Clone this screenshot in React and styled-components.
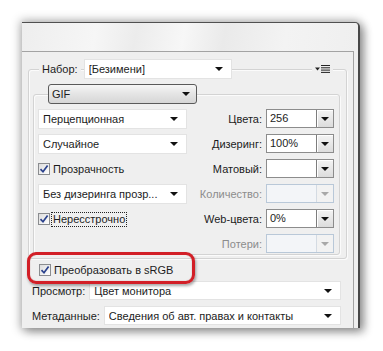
import React from "react";
import styled, { createGlobalStyle } from "styled-components";

const Global = createGlobalStyle`
  html, body { margin: 0; padding: 0; background: #ffffff; }
  body { font-family: "Liberation Sans", Arial, sans-serif; font-size: 11px; color: #1c1c1c; }
  * { box-sizing: border-box; }
`;

const Stage = styled.div`
  width: 383px;
  height: 351px;
  padding: 22px 23px 23px 22px;
  background: #ffffff;
`;

const Panel = styled.div`
  width: 338px;
  height: 306px;
  display: flex;
  flex-direction: column;
  background: #efefef;
  border-top: 1px solid #505050;
  border-right: 2px solid #484848;
  border-top-right-radius: 5px;
  box-shadow: 0 0 10px 2px rgba(0, 0, 0, 0.28), 4px 4px 10px rgba(0, 0, 0, 0.3);
`;

const Header = styled.div`
  height: 28px;
  flex: none;
  border-top-right-radius: 4px;
  background: linear-gradient(100deg, #eeeeee 0%, #f6f6f6 22%, #ececec 34%, #f7f7f7 48%, #eaeaea 60%, #f3f3f3 78%, #efefef 100%);
`;

const Content = styled.div`
  flex: 1;
  margin-right: 4px;
  border-top: 1px solid #a3a3a3;
  border-right: 1px solid #a3a3a3;
  padding: 17px 6px 0 6px;
  display: flex;
  flex-direction: column;
`;

const Group = styled.div`
  border: 1px solid #d3d3d3;
  border-radius: 3px;
  box-shadow: inset 1px 1px 0 #fbfbfb, 1px 1px 0 #fbfbfb;
  margin: ${(p) => p.$margin || "0"};
  display: flex;
  flex-direction: column;
`;

const Legend = styled.div`
  display: flex;
  align-items: center;
  height: 20px;
  margin-top: -11px;
  padding-left: ${(p) => p.$indent}px;
`;

const LegendLabel = styled.span`
  background: #efefef;
  padding: 0 3px;
  line-height: 20px;
`;

const Spacer = styled.div`
  flex: 1;
`;

const MenuButton = styled.span`
  background: #efefef;
  padding: 0 3px;
  margin-right: 13px;
  display: flex;
  align-items: center;
  height: 20px;
`;

const Select = styled.div`
  width: ${(p) => (p.$width ? `${p.$width}px` : "auto")};
  flex: ${(p) => (p.$grow ? 1 : "none")};
  height: ${(p) => p.$h || 20}px;
  margin-left: ${(p) => p.$ml || 0}px;
  background: #ffffff;
  border: 1px solid #e3e3e3;
  display: flex;
  align-items: center;
  padding: 0 8px 0 4px;
  white-space: nowrap;
`;

const SelectText = styled.span`
  flex: 1;
  overflow: hidden;
`;

const Arrow = styled.span`
  width: 0;
  height: 0;
  border-left: 4px solid transparent;
  border-right: 4px solid transparent;
  border-top: 4px solid ${(p) => (p.$disabled ? "#a8a8a8" : "#111")};
`;

const FormatSelect = styled.div`
  width: 149px;
  height: 20px;
  margin-left: 14px;
  border: 1px solid #5a5a5a;
  border-radius: 3px;
  background: linear-gradient(#f6f6f6, #e4e4e4 50%, #d6d6d6);
  display: flex;
  align-items: center;
  padding: 0 6px 0 3px;
`;

const Grid = styled.div`
  display: grid;
  grid-template-columns: 149px 1fr 68px;
  grid-auto-rows: 20px;
  column-gap: 4px;
  row-gap: 5px;
  margin-top: 5px;
  padding: 0 5px 0 4px;
`;

const Cell = styled.div`
  grid-column: ${(p) => p.$col};
  grid-row: ${(p) => p.$row};
  display: flex;
  align-items: center;
  justify-content: ${(p) => (p.$end ? "flex-end" : "flex-start")};
  color: ${(p) => (p.$disabled ? "#8c8c8c" : "inherit")};
  white-space: nowrap;
`;

const Combo = styled.div`
  width: 68px;
  height: 19px;
  display: flex;
  background: ${(p) => (p.$disabled ? "#f3f5f8" : "#ffffff")};
  border: 1px solid ${(p) => (p.$disabled ? "#b9c8d8" : "#8c8c8c")};
  align-self: flex-start;
`;

const ComboText = styled.span`
  flex: 1;
  padding-left: 3px;
  line-height: 17px;
`;

const ComboButton = styled.span`
  width: 17px;
  display: flex;
  align-items: center;
  justify-content: center;
  border-left: 1px solid ${(p) => (p.$disabled ? "#d4dbe3" : "#7d7d7d")};
  background: ${(p) => (p.$disabled ? "#f2f2f2" : "linear-gradient(#f4f4f4, #dcdcdc)")};
  box-shadow: ${(p) => (p.$disabled ? "none" : "inset 1px 1px 0 #ffffff")};
`;

const CheckRow = styled.label`
  display: flex;
  align-items: center;
  gap: 2px;
  position: relative;
  height: 14px;
`;

const Box = styled.span`
  width: 12px;
  height: 12px;
  border: 1px solid #8a8c8f;
  background: linear-gradient(135deg, #dcdcdc, #ffffff);
  display: flex;
  align-items: center;
  justify-content: center;
  flex: none;
`;

const CheckText = styled.span`
  padding: 0 1px;
  outline: ${(p) => (p.$focus ? "1px dotted #222" : "none")};
  line-height: 13px;
`;

const Bottom = styled.div`
  display: flex;
  flex-direction: column;
  padding: 0 6px 0 4px;
`;

const ConvertRow = styled.div`
  position: relative;
  margin-top: 4px;
  padding-left: 7px;
  height: 14px;
  display: flex;
  align-items: center;
`;

const Highlight = styled.div`
  position: absolute;
  left: -5px;
  top: -11px;
  width: 168px;
  height: 32px;
  border: 3px solid #d21f27;
  border-radius: 9px;
  box-shadow: 1px 2px 3px rgba(0, 0, 0, 0.35), inset 0 0 1px rgba(120, 0, 0, 0.5);
  z-index: 2;
  pointer-events: none;
`;

const FieldRow = styled.div`
  display: flex;
  align-items: center;
  gap: 4px;
  margin-top: ${(p) => p.$mt}px;
`;

const Check = () => (
  <Box>
    <svg width="10" height="10" viewBox="0 0 10 10">
      <path d="M1.5 5.2 L4 7.8 L8.6 1.6" fill="none" stroke="#2a418c" strokeWidth="1.7" />
    </svg>
  </Box>
);

const MenuIcon = () => (
  <svg width="15" height="8" viewBox="0 0 15 8">
    <polygon points="0,2.5 5,2.5 2.5,5.5" fill="#222" />
    <rect x="6" y="0" width="9" height="1" fill="#222" />
    <rect x="6" y="2.3" width="9" height="1" fill="#222" />
    <rect x="6" y="4.6" width="9" height="1" fill="#222" />
    <rect x="6" y="6.9" width="9" height="1" fill="#222" />
  </svg>
);

const Dropdown = ({ text, width, grow, ml, h }) => (
  <Select $width={width} $grow={grow} $ml={ml} $h={h}>
    <SelectText>{text}</SelectText>
    <Arrow />
  </Select>
);

const ComboBox = ({ value, disabled }) => (
  <Combo $disabled={disabled}>
    <ComboText>{value}</ComboText>
    <ComboButton $disabled={disabled}>
      <Arrow $disabled={disabled} />
    </ComboButton>
  </Combo>
);

const rightRows = [
  { label: "Цвета:", value: "256" },
  { label: "Дизеринг:", value: "100%" },
  { label: "Матовый:", value: "" },
  { label: "Количество:", value: "", disabled: true },
  { label: "Web-цвета:", value: "0%" },
  { label: "Потери:", value: "", disabled: true },
];

export default function App() {
  return (
    <>
      <Global />
      <Stage>
        <Panel>
          <Header />
          <Content>
            <Group $margin="0">
              <Legend $indent={10}>
                <LegendLabel>Набор:</LegendLabel>
                <Dropdown text="[Безимени]" width={148} ml={3} />
                <Spacer />
                <MenuButton>
                  <MenuIcon />
                </MenuButton>
              </Legend>
              <Group $margin="15px 6px 3px 4px">
                <Legend $indent={0}>
                  <FormatSelect>
                    <SelectText>GIF</SelectText>
                    <Arrow />
                  </FormatSelect>
                </Legend>
                <Grid>
                  <Cell $col={1} $row={1}>
                    <Dropdown text="Перцепционная" width={149} />
                  </Cell>
                  <Cell $col={1} $row={2}>
                    <Dropdown text="Случайное" width={149} />
                  </Cell>
                  <Cell $col={1} $row={3}>
                    <CheckRow>
                      <Check />
                      <CheckText>Прозрачность</CheckText>
                    </CheckRow>
                  </Cell>
                  <Cell $col={1} $row={4}>
                    <Dropdown text="Без дизеринга прозр..." width={149} />
                  </Cell>
                  <Cell $col={1} $row={5}>
                    <CheckRow>
                      <Check />
                      <CheckText $focus>Нересстрочно</CheckText>
                    </CheckRow>
                  </Cell>
                  {rightRows.map((r, i) => (
                    <React.Fragment key={r.label}>
                      <Cell $col={2} $row={i + 1} $end $disabled={r.disabled}>
                        {r.label}
                      </Cell>
                      <Cell $col={3} $row={i + 1}>
                        <ComboBox value={r.value} disabled={r.disabled} />
                      </Cell>
                    </React.Fragment>
                  ))}
                </Grid>
              </Group>
            </Group>
            <Bottom>
              <ConvertRow>
                <Highlight />
                <CheckRow>
                  <Check />
                  <CheckText>Преобразовать в sRGB</CheckText>
                </CheckRow>
              </ConvertRow>
              <FieldRow $mt={4}>
                <span>Просмотр:</span>
                <Dropdown text="Цвет монитора" grow h={19} />
              </FieldRow>
              <FieldRow $mt={6}>
                <span>Метаданные:</span>
                <Dropdown text="Сведения об авт. правах и контакты" grow h={19} />
              </FieldRow>
            </Bottom>
          </Content>
        </Panel>
      </Stage>
    </>
  );
}
